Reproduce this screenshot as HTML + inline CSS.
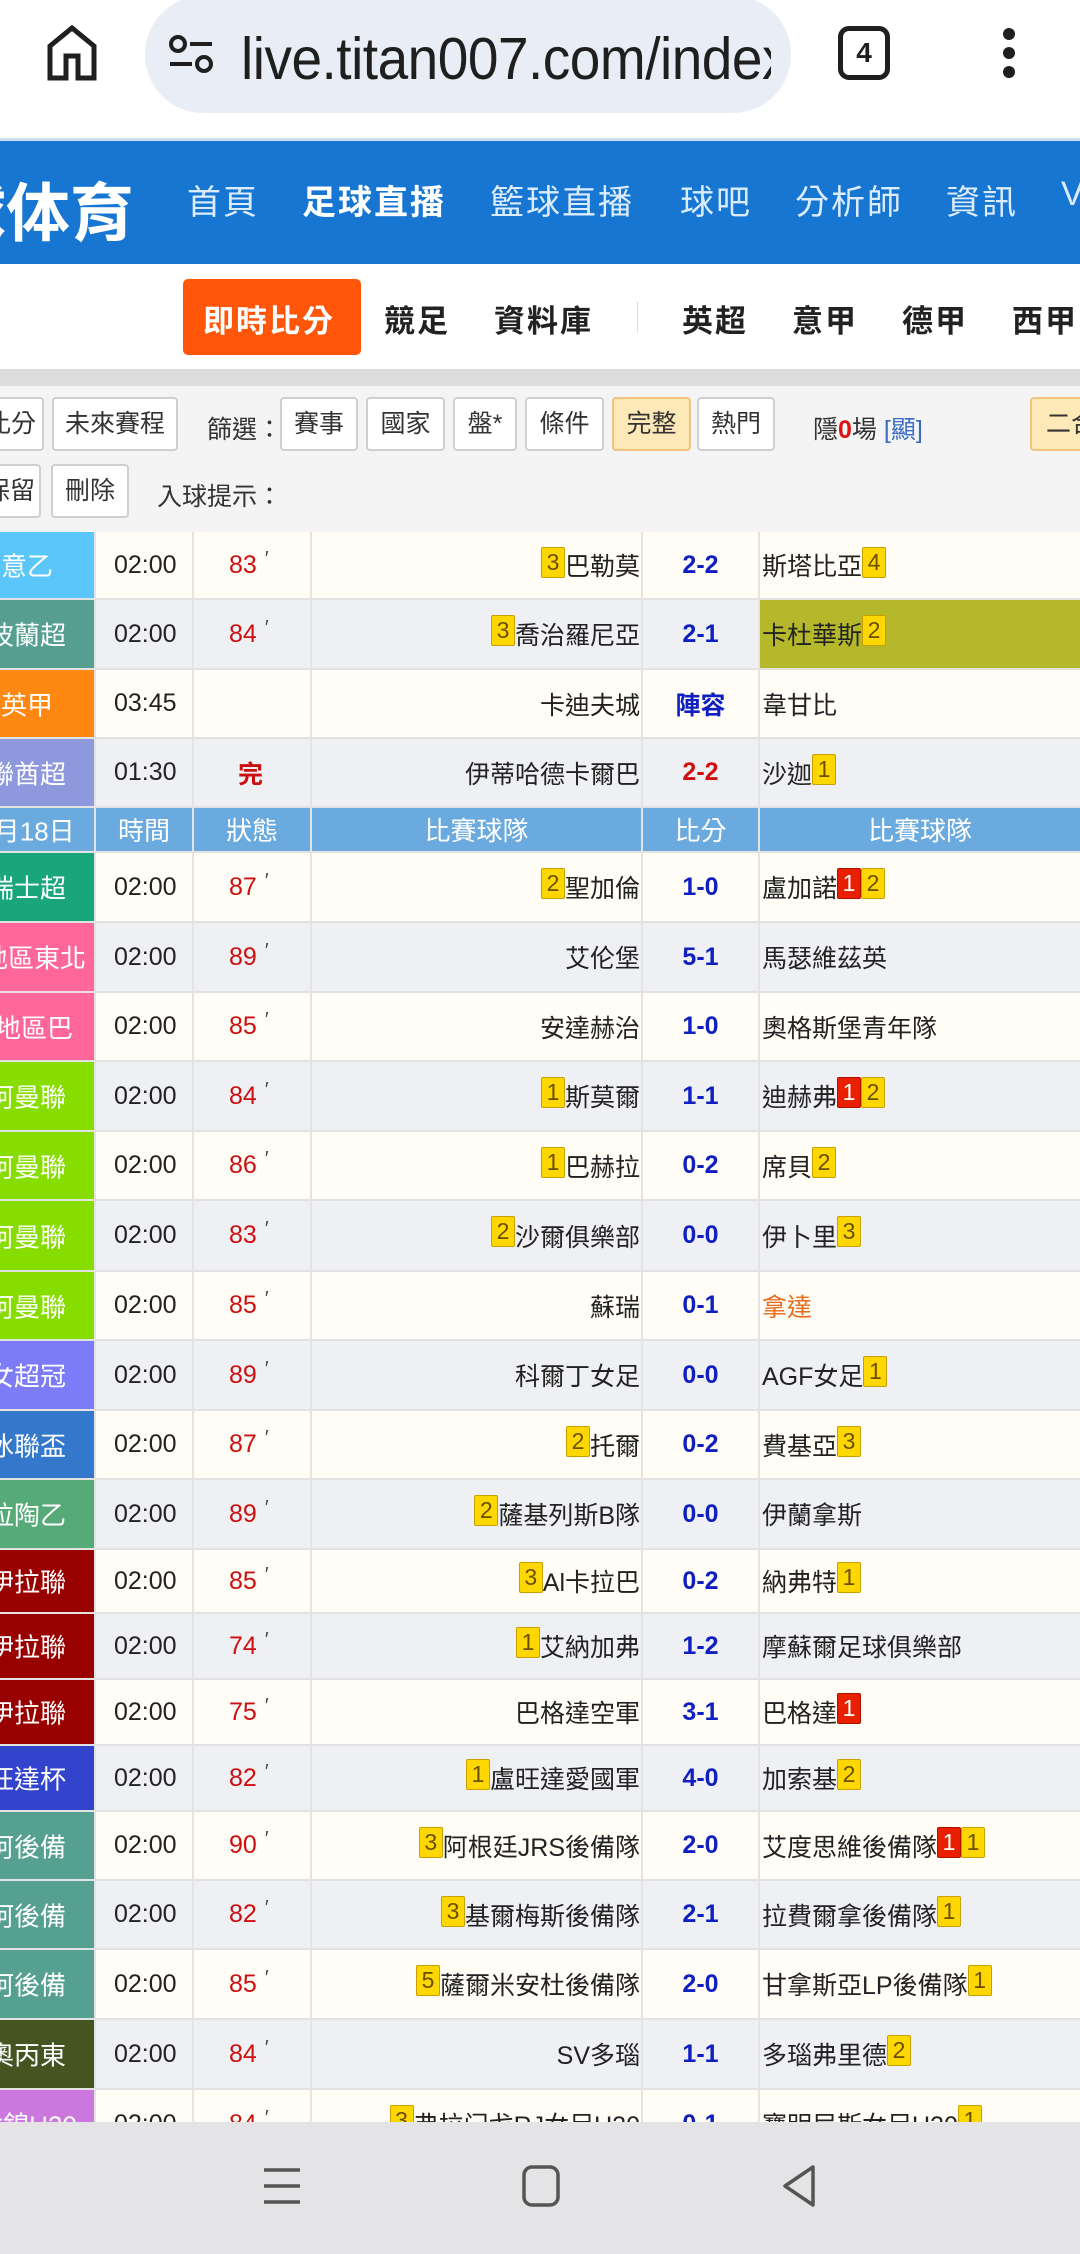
<!DOCTYPE html>
<html><head><meta charset="utf-8">
<style>
*{margin:0;padding:0;box-sizing:border-box}
body{width:1080px;height:2254px;overflow:hidden;background:#fff;font-family:"Liberation Sans","Noto Sans CJK TC",sans-serif;position:relative}
.abs{position:absolute}
#chrome{left:0;top:0;width:1080px;height:138px;background:#fff}
#pill{left:145px;top:-4px;width:646px;height:117px;border-radius:58px;background:#e9edf5}
#url{left:241px;top:24px;font-size:55px;color:#1f1f1f;white-space:nowrap;width:530px;overflow:hidden;letter-spacing:-0.5px;transform:scaleY(1.08);transform-origin:top left}
#hdr{left:0;top:138px;width:1080px;height:126px;background:#1776d1;border-top:3px solid #c9def3}
.nav{position:absolute;top:34px;font-size:34px;color:#dcecff;white-space:nowrap;letter-spacing:2px}
#sub{left:0;top:264px;width:1080px;height:105px;background:#fff}
.sn{position:absolute;top:32px;font-size:31px;color:#222;font-weight:bold;letter-spacing:2px}
#band{left:0;top:369px;width:1080px;height:17px;background:#dcdcdc}
#tool{left:0;top:386px;width:1080px;height:146px;background:#f4f4f5}
.bt{position:absolute;top:11px;height:54px;background:#fff;border:2px solid #cfcfcf;border-radius:4px;font-size:25px;color:#333;text-align:center;line-height:50px}
.bt2{top:78px}
.tx{position:absolute;font-size:25px;color:#333;white-space:nowrap}
.r{position:absolute;left:0;width:1080px;display:flex;border-bottom:2px solid #e2e2e2;font-size:25px;color:#222}
.r.a{background:#fffdf5}.r.b{background:#eff0f3}
.r>div{border-right:2px solid #e4e4e4;height:100%;display:flex;align-items:center;white-space:nowrap;position:relative;overflow:hidden}
.c1{width:96px}.c2{width:98px;padding-left:18px}.c3{width:118px;padding-left:35px;color:#cc1010}.c4{width:331px;justify-content:flex-end;padding-right:1px}.c5{width:117px;justify-content:center;color:#1020c0;font-weight:bold}.c6{width:320px;padding-left:2px;border-right:none!important}
.lg{position:absolute;left:27px;top:50%;transform:translate(-50%,-50%);color:#fff;font-size:26px;white-space:nowrap}
.c3 sup{font-size:20px;color:#444;margin-left:8px;position:relative;top:-6px}
.y,.rd{display:inline-block;width:24px;height:31px;font-size:23px;line-height:29px;text-align:center;font-weight:normal;align-self:flex-start;margin-top:15px;border-radius:2px}
.y{background:#ffd700;border:1px solid #c8a000;color:#6a5000}
.rd{background:#e82000;border:1px solid #b01000;color:#fff}
.hd{position:absolute;left:0;top:808px;width:1080px;height:45px;display:flex;background:#6aaade;color:#fff;font-size:26px;border-bottom:2px solid #e2e2e2}
.hd>div{border-right:2px solid #e4e4e4;display:flex;align-items:center;justify-content:center;position:relative;overflow:hidden}
#bot{left:0;top:2122px;width:1080px;height:132px;background:#e4e4e6}
</style></head><body>

<div id="chrome" class="abs">
  <svg class="abs" style="left:46px;top:24px" width="52" height="58" viewBox="0 0 52 58"><path d="M4 54 V22 L26 4 L48 22 V54 H32 V32 H20 V54 Z" fill="none" stroke="#1f1f1f" stroke-width="5" stroke-linejoin="miter"/></svg>
  <div id="pill" class="abs"></div>
  <svg class="abs" style="left:168px;top:34px" width="50" height="42" viewBox="0 0 50 42"><circle cx="10" cy="10" r="7" fill="none" stroke="#1f1f1f" stroke-width="4"/><line x1="22" y1="10" x2="44" y2="10" stroke="#1f1f1f" stroke-width="4"/><line x1="2" y1="30" x2="24" y2="30" stroke="#1f1f1f" stroke-width="4"/><circle cx="36" cy="30" r="7" fill="none" stroke="#1f1f1f" stroke-width="4"/></svg>
  <div id="url" class="abs">live.titan007.com/index</div>
  <div class="abs" style="left:838px;top:26px;width:52px;height:54px;border:5px solid #1f1f1f;border-radius:11px;font-size:28px;font-weight:bold;text-align:center;line-height:44px;color:#1f1f1f">4</div>
  <div class="abs" style="left:1003px;top:28px;width:12px;height:12px;border-radius:6px;background:#1f1f1f"></div>
  <div class="abs" style="left:1003px;top:47px;width:12px;height:12px;border-radius:6px;background:#1f1f1f"></div>
  <div class="abs" style="left:1003px;top:66px;width:12px;height:12px;border-radius:6px;background:#1f1f1f"></div>
</div>

<div id="hdr" class="abs">
  <div class="abs" style="left:-58px;top:22px;font-size:64px;font-weight:bold;color:#fff;white-space:nowrap">球体育</div>
  <div class="nav" style="left:187px">首頁</div>
  <div class="nav" style="left:302px;color:#fff;font-weight:bold">足球直播</div>
  <div class="nav" style="left:490px">籃球直播</div>
  <div class="nav" style="left:680px">球吧</div>
  <div class="nav" style="left:795px">分析師</div>
  <div class="nav" style="left:946px">資訊</div>
  <div class="nav" style="left:1061px">VIP</div>
</div>

<div id="sub" class="abs">
  <div class="abs" style="left:183px;top:15px;width:178px;height:76px;background:#ff560a;border-radius:5px"></div>
  <div class="sn" style="left:203px;color:#fff">即時比分</div>
  <div class="sn" style="left:384px">競足</div>
  <div class="sn" style="left:494px">資料庫</div>
  <div class="abs" style="left:637px;top:38px;width:1px;height:30px;background:#ddd"></div>
  <div class="sn" style="left:682px">英超</div>
  <div class="sn" style="left:792px">意甲</div>
  <div class="sn" style="left:902px">德甲</div>
  <div class="sn" style="left:1012px">西甲</div>
</div>

<div id="band" class="abs"></div>
<div id="tool" class="abs">
  <div class="bt" style="left:-40px;width:84px;text-align:right;padding-right:6px">比分</div>
  <div class="bt" style="left:52px;width:126px">未來賽程</div>
  <div class="tx" style="left:207px;top:24px">篩選：</div>
  <div class="bt" style="left:280px;width:78px">賽事</div>
  <div class="bt" style="left:366px;width:79px">國家</div>
  <div class="bt" style="left:453px;width:64px">盤*</div>
  <div class="bt" style="left:525px;width:79px">條件</div>
  <div class="bt" style="left:612px;width:79px;background:#fde8b8;border-color:#efc57c">完整</div>
  <div class="bt" style="left:697px;width:78px">熱門</div>
  <div class="tx" style="left:813px;top:24px">隱<b style="color:#e01010">0</b>場 <span style="color:#3b6cc0">[顯]</span></div>
  <div class="bt" style="left:1030px;width:90px;background:#fde8b8;border-color:#efc57c;text-align:left;padding-left:14px">二合</div>
  <div class="bt bt2" style="left:-40px;width:81px;text-align:right;padding-right:4px">保留</div>
  <div class="bt bt2" style="left:51px;width:78px">刪除</div>
  <div class="tx" style="left:157px;top:91px">入球提示：</div>
</div>

<!-- rows -->
<div class="r a" style="top:532px;height:68px"><div class="c1" style="background:#5bc6fa"><span class="lg">意乙</span></div><div class="c2">02:00</div><div class="c3">83<sup>′</sup></div><div class="c4"><span class="y">3</span>巴勒莫</div><div class="c5">2-2</div><div class="c6">斯塔比亞<span class="y">4</span></div></div>
<div class="r b" style="top:600px;height:70px"><div class="c1" style="background:#559e90"><span class="lg">波蘭超</span></div><div class="c2">02:00</div><div class="c3">84<sup>′</sup></div><div class="c4"><span class="y">3</span>喬治羅尼亞</div><div class="c5">2-1</div><div class="c6" style="background:#b5b82a">卡杜華斯<span class="y">2</span></div></div>
<div class="r a" style="top:670px;height:69px"><div class="c1" style="background:#ff8812"><span class="lg">英甲</span></div><div class="c2">03:45</div><div class="c3"></div><div class="c4">卡迪夫城</div><div class="c5">陣容</div><div class="c6">韋甘比</div></div>
<div class="r b" style="top:739px;height:69px"><div class="c1" style="background:#8e98dc"><span class="lg">聯酋超</span></div><div class="c2">01:30</div><div class="c3" style="padding-left:44px;font-weight:bold">完</div><div class="c4">伊蒂哈德卡爾巴</div><div class="c5" style="color:#d01010">2-2</div><div class="c6">沙迦<span class="y">1</span></div></div>

<div class="hd"><div style="width:96px"><span class="lg">8月18日</span></div><div style="width:98px">時間</div><div style="width:118px">狀態</div><div style="width:331px">比賽球隊</div><div style="width:117px">比分</div><div style="width:320px;border:none">比賽球隊</div></div>

<div class="r a" style="top:853px;height:70px"><div class="c1" style="background:#18a67a"><span class="lg">瑞士超</span></div><div class="c2">02:00</div><div class="c3">87<sup>′</sup></div><div class="c4"><span class="y">2</span>聖加倫</div><div class="c5">1-0</div><div class="c6">盧加諾<span class="rd">1</span><span class="y">2</span></div></div>
<div class="r b" style="top:923px;height:70px"><div class="c1" style="background:#ff6699"><span class="lg" style="left:34px">地區東北</span></div><div class="c2">02:00</div><div class="c3">89<sup>′</sup></div><div class="c4">艾伦堡</div><div class="c5">5-1</div><div class="c6">馬瑟維茲英</div></div>
<div class="r a" style="top:993px;height:69px"><div class="c1" style="background:#ff6699"><span class="lg" style="left:34px">地區巴</span></div><div class="c2">02:00</div><div class="c3">85<sup>′</sup></div><div class="c4">安達赫治</div><div class="c5">1-0</div><div class="c6">奧格斯堡青年隊</div></div>
<div class="r b" style="top:1062px;height:70px"><div class="c1" style="background:#88dd00"><span class="lg">阿曼聯</span></div><div class="c2">02:00</div><div class="c3">84<sup>′</sup></div><div class="c4"><span class="y">1</span>斯莫爾</div><div class="c5">1-1</div><div class="c6">迪赫弗<span class="rd">1</span><span class="y">2</span></div></div>
<div class="r a" style="top:1132px;height:69px"><div class="c1" style="background:#88dd00"><span class="lg">阿曼聯</span></div><div class="c2">02:00</div><div class="c3">86<sup>′</sup></div><div class="c4"><span class="y">1</span>巴赫拉</div><div class="c5">0-2</div><div class="c6">席貝<span class="y">2</span></div></div>
<div class="r b" style="top:1201px;height:71px"><div class="c1" style="background:#88dd00"><span class="lg">阿曼聯</span></div><div class="c2">02:00</div><div class="c3">83<sup>′</sup></div><div class="c4"><span class="y">2</span>沙爾俱樂部</div><div class="c5">0-0</div><div class="c6">伊卜里<span class="y">3</span></div></div>
<div class="r a" style="top:1272px;height:69px"><div class="c1" style="background:#88dd00"><span class="lg">阿曼聯</span></div><div class="c2">02:00</div><div class="c3">85<sup>′</sup></div><div class="c4">蘇瑞</div><div class="c5">0-1</div><div class="c6" style="color:#e86a1a">拿達</div></div>
<div class="r b" style="top:1341px;height:70px"><div class="c1" style="background:#7c7cf8"><span class="lg">女超冠</span></div><div class="c2">02:00</div><div class="c3">89<sup>′</sup></div><div class="c4">科爾丁女足</div><div class="c5">0-0</div><div class="c6">AGF女足<span class="y">1</span></div></div>
<div class="r a" style="top:1411px;height:69px"><div class="c1" style="background:#3478cc"><span class="lg">冰聯盃</span></div><div class="c2">02:00</div><div class="c3">87<sup>′</sup></div><div class="c4"><span class="y">2</span>托爾</div><div class="c5">0-2</div><div class="c6">費基亞<span class="y">3</span></div></div>
<div class="r b" style="top:1480px;height:70px"><div class="c1" style="background:#55aa77"><span class="lg">拉陶乙</span></div><div class="c2">02:00</div><div class="c3">89<sup>′</sup></div><div class="c4"><span class="y">2</span>薩基列斯B隊</div><div class="c5">0-0</div><div class="c6">伊蘭拿斯</div></div>
<div class="r a" style="top:1550px;height:64px"><div class="c1" style="background:#990000"><span class="lg">伊拉聯</span></div><div class="c2">02:00</div><div class="c3">85<sup>′</sup></div><div class="c4"><span class="y" style="margin-top:12px">3</span>Al卡拉巴</div><div class="c5">0-2</div><div class="c6">納弗特<span class="y" style="margin-top:12px">1</span></div></div>
<div class="r b" style="top:1614px;height:66px"><div class="c1" style="background:#990000"><span class="lg">伊拉聯</span></div><div class="c2">02:00</div><div class="c3">74<sup>′</sup></div><div class="c4"><span class="y" style="margin-top:13px">1</span>艾納加弗</div><div class="c5">1-2</div><div class="c6">摩蘇爾足球俱樂部</div></div>
<div class="r a" style="top:1680px;height:66px"><div class="c1" style="background:#990000"><span class="lg">伊拉聯</span></div><div class="c2">02:00</div><div class="c3">75<sup>′</sup></div><div class="c4">巴格達空軍</div><div class="c5">3-1</div><div class="c6">巴格達<span class="rd" style="margin-top:13px">1</span></div></div>
<div class="r b" style="top:1746px;height:66px"><div class="c1" style="background:#3344cc"><span class="lg">旺達杯</span></div><div class="c2">02:00</div><div class="c3">82<sup>′</sup></div><div class="c4"><span class="y" style="margin-top:13px">1</span>盧旺達愛國軍</div><div class="c5">4-0</div><div class="c6">加索基<span class="y" style="margin-top:13px">2</span></div></div>
<div class="r a" style="top:1812px;height:69px"><div class="c1" style="background:#55a090"><span class="lg">阿後備</span></div><div class="c2">02:00</div><div class="c3">90<sup>′</sup></div><div class="c4"><span class="y">3</span>阿根廷JRS後備隊</div><div class="c5">2-0</div><div class="c6">艾度思維後備隊<span class="rd">1</span><span class="y">1</span></div></div>
<div class="r b" style="top:1881px;height:69px"><div class="c1" style="background:#55a090"><span class="lg">阿後備</span></div><div class="c2">02:00</div><div class="c3">82<sup>′</sup></div><div class="c4"><span class="y">3</span>基爾梅斯後備隊</div><div class="c5">2-1</div><div class="c6">拉費爾拿後備隊<span class="y">1</span></div></div>
<div class="r a" style="top:1950px;height:70px"><div class="c1" style="background:#55a090"><span class="lg">阿後備</span></div><div class="c2">02:00</div><div class="c3">85<sup>′</sup></div><div class="c4"><span class="y">5</span>薩爾米安杜後備隊</div><div class="c5">2-0</div><div class="c6">甘拿斯亞LP後備隊<span class="y">1</span></div></div>
<div class="r b" style="top:2020px;height:70px"><div class="c1" style="background:#445522"><span class="lg">奧丙東</span></div><div class="c2">02:00</div><div class="c3">84<sup>′</sup></div><div class="c4">SV多瑙</div><div class="c5">1-1</div><div class="c6">多瑙弗里德<span class="y">2</span></div></div>
<div class="r a" style="top:2090px;height:70px"><div class="c1" style="background:#cc77dd"><span class="lg">女錦U20</span></div><div class="c2">02:00</div><div class="c3">84<sup>′</sup></div><div class="c4"><span class="y">3</span>弗拉门戈RJ女足U20</div><div class="c5">0-1</div><div class="c6">寶明尼斯女足U20<span class="y">1</span></div></div>

<div id="bot" class="abs">
  <svg class="abs" style="left:262px;top:44px" width="40" height="40" viewBox="0 0 40 40"><g stroke="#555" stroke-width="3.5"><line x1="2" y1="4" x2="38" y2="4"/><line x1="2" y1="20" x2="38" y2="20"/><line x1="2" y1="36" x2="38" y2="36"/></g></svg>
  <svg class="abs" style="left:521px;top:42px" width="40" height="44" viewBox="0 0 40 44"><rect x="3" y="3" width="34" height="38" rx="8" fill="none" stroke="#555" stroke-width="3.5"/></svg>
  <svg class="abs" style="left:779px;top:42px" width="40" height="44" viewBox="0 0 40 44"><path d="M34 3 L6 22 L34 41 Z" fill="none" stroke="#555" stroke-width="3.5" stroke-linejoin="round"/></svg>
</div>
</body></html>
